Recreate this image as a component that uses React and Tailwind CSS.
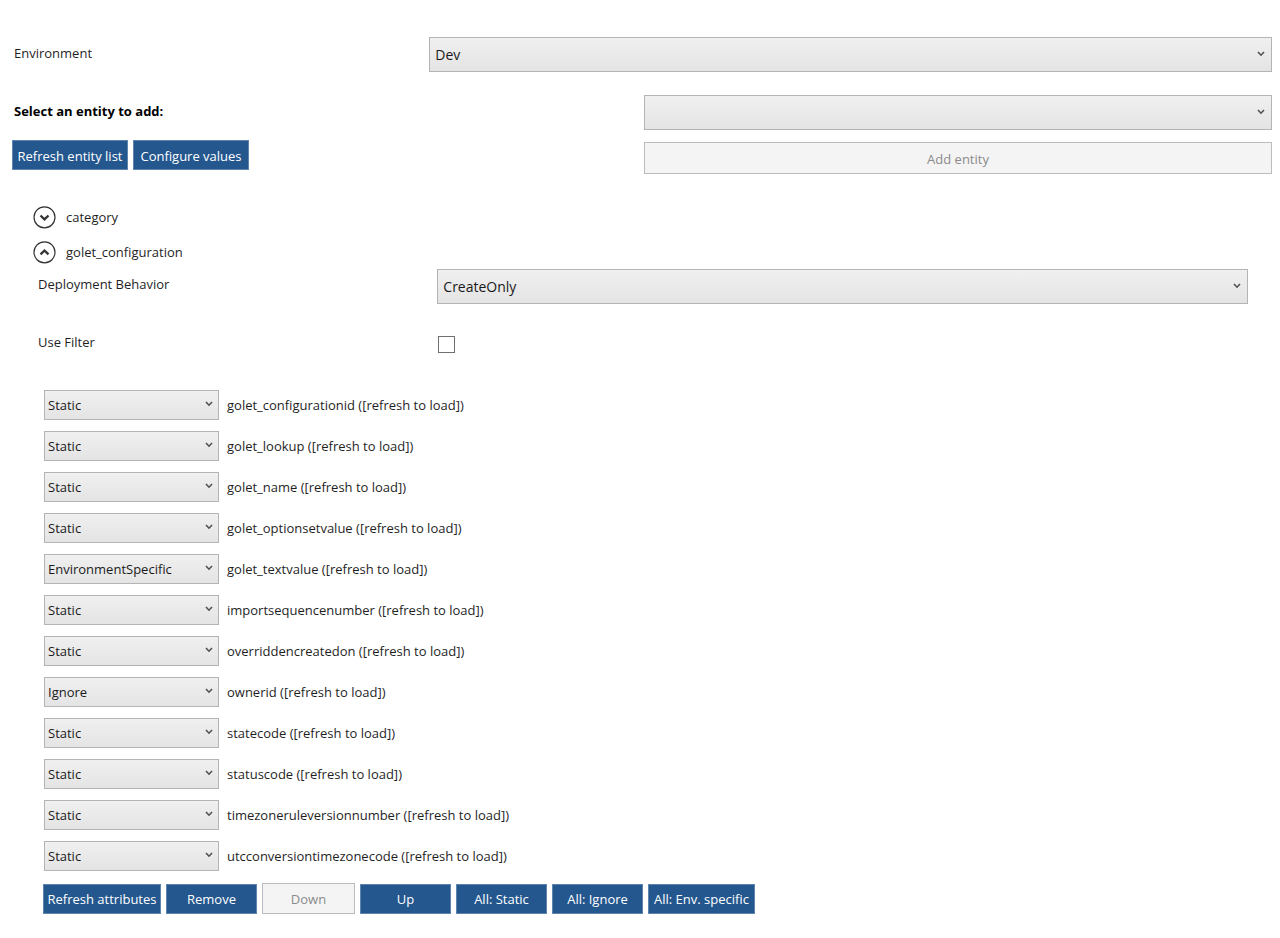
import React, { useState } from 'react';
import clsx from 'clsx';

const ATTRIBUTES = [
  { name: 'golet_configurationid', mode: 'Static' },
  { name: 'golet_lookup', mode: 'Static' },
  { name: 'golet_name', mode: 'Static' },
  { name: 'golet_optionsetvalue', mode: 'Static' },
  { name: 'golet_textvalue', mode: 'EnvironmentSpecific' },
  { name: 'importsequencenumber', mode: 'Static' },
  { name: 'overriddencreatedon', mode: 'Static' },
  { name: 'ownerid', mode: 'Ignore' },
  { name: 'statecode', mode: 'Static' },
  { name: 'statuscode', mode: 'Static' },
  { name: 'timezoneruleversionnumber', mode: 'Static' },
  { name: 'utcconversiontimezonecode', mode: 'Static' },
];

const MODES = ['Static', 'EnvironmentSpecific', 'Ignore'];

function ComboBox({ id, options, small, value, onChange }) {
  return (
    <div className="relative">
      <select
        id={id}
        value={value}
        onChange={(e) => onChange(e.target.value)}
        className={clsx(
          'block w-full appearance-none rounded-none border border-[#b4b4b4] bg-linear-to-b from-[#f0f0f0] to-[#e4e4e4] text-[#1a1a1a]',
          small ? 'h-[30px] pl-[3px] pr-6 text-[13px]' : 'h-[35px] pl-[5px] pr-8 text-[14px]'
        )}
      >
        {options.map((option) => (
          <option key={option} value={option}>{option}</option>
        ))}
      </select>
      <svg
        viewBox="0 0 8 6"
        aria-hidden="true"
        className={clsx(
          'pointer-events-none absolute h-[6px] w-[8px]',
          small ? 'right-[6px] top-[11px]' : 'right-[7px] top-[14px]'
        )}
      >
        <path d="M1 1 L4 4.2 L7 1" fill="none" stroke="#505050" strokeWidth="1.6" />
      </svg>
    </div>
  );
}

function Button({ children, disabled, className }) {
  return (
    <button
      type="button"
      disabled={disabled}
      className={clsx(
        'border pt-px text-[13px] whitespace-nowrap',
        disabled
          ? 'border-[#b9bdbf] bg-[#f4f4f4] text-[#8b8b8b]'
          : 'h-[30px] border-[#5f84ae] bg-[#24578e] text-white',
        className
      )}
    >
      {children}
    </button>
  );
}

// Expander header with the round arrow
function Expander({ name, open, onToggle }) {
  return (
    <button type="button" aria-expanded={open} onClick={onToggle} className="flex h-[35px] items-center gap-[10px]">
      <svg viewBox="0 0 24 24" className="h-6 w-6" fill="none" stroke="#333333" aria-hidden="true">
        <circle cx="12.5" cy="12.3" r="10.5" strokeWidth="1.2" />
        <path d={open ? 'M8.5 14.3 L12.5 10.5 L16.5 14.3' : 'M8.5 10.5 L12.5 14.3 L16.5 10.5'} strokeWidth="2.3" />
      </svg>
      <span>{name}</span>
    </button>
  );
}

export default function App() {
  const [environment, setEnvironment] = useState('Dev');
  const [entity, setEntity] = useState('');
  const [behavior, setBehavior] = useState('CreateOnly');
  const [useFilter, setUseFilter] = useState(false);
  const [attributes, setAttributes] = useState(ATTRIBUTES);
  const [categoryOpen, setCategoryOpen] = useState(false);
  const [configOpen, setConfigOpen] = useState(true);

  const setMode = (name, mode) => {
    setAttributes(attributes.map((a) => (a.name === name ? { ...a, mode } : a)));
  };

  return (
    <main className="bg-white px-2 pt-[37px] pb-6 font-['Open_Sans','Noto_Sans',sans-serif] text-[13px] leading-5 text-[#1f1f1f]">
      <div className="grid grid-cols-[1fr_2fr]">
        <label htmlFor="environment" className="pt-[6px] pl-[6px]">Environment</label>
        <ComboBox id="environment" options={['Dev', 'Test', 'Prod']} value={environment} onChange={setEnvironment} />
      </div>

      <div className="mt-[23px] grid grid-cols-2">
        <div className="pl-1">
          <label htmlFor="entity" className="block pt-[6px] pl-[2px] font-bold text-black">
            Select an entity to add:
          </label>
          <div className="mt-[19px] flex gap-[5px]">
            <Button className="w-[116px]">Refresh entity list</Button>
            <Button className="w-[116px]">Configure values</Button>
          </div>
        </div>
        <div className="flex flex-col gap-3 pl-1">
          <ComboBox id="entity" options={['', 'account', 'contact']} value={entity} onChange={setEntity} />
          <Button disabled className="h-8">Add entity</Button>
        </div>
      </div>

      <section className="mt-[25px] px-6">
        <Expander name="category" open={categoryOpen} onToggle={() => setCategoryOpen(!categoryOpen)} />
        <Expander name="golet_configuration" open={configOpen} onToggle={() => setConfigOpen(!configOpen)} />

        {configOpen && (
          <>
            <div className="grid grid-cols-[1fr_2fr]">
              <label htmlFor="behavior" className="pt-[5px] pl-[6px]">Deployment Behavior</label>
              <ComboBox
                id="behavior"
                options={['CreateOnly', 'CreateAndUpdate']}
                value={behavior}
                onChange={setBehavior}
              />
            </div>
            <div className="mt-7 grid grid-cols-[1fr_2fr]">
              <label htmlFor="filter" className="pl-[6px]">Use Filter</label>
              <input
                id="filter"
                type="checkbox"
                checked={useFilter}
                onChange={(e) => setUseFilter(e.target.checked)}
                className="mt-1 ml-px h-[17px] w-[17px] appearance-none border border-[#707070] bg-white checked:bg-[#24578e]"
              />
            </div>

            <ul className="mt-[37px] flex flex-col gap-[11px] pl-3">
              {attributes.map((attr) => (
                <li key={attr.name} className="flex items-center gap-2">
                  <div className="w-[175px]">
                    <ComboBox
                      id={attr.name}
                      small
                      options={MODES}
                      value={attr.mode}
                      onChange={(mode) => setMode(attr.name, mode)}
                    />
                  </div>
                  <label htmlFor={attr.name}>{attr.name} ([refresh to load])</label>
                </li>
              ))}
            </ul>

            <div className="mt-3 flex items-center gap-[5px] pl-[11px]">
              <Button className="w-[118px]">Refresh attributes</Button>
              <Button className="w-[91px]">Remove</Button>
              <Button disabled className="h-[31px] w-[93px]">Down</Button>
              <Button className="w-[91px]">Up</Button>
              <Button className="w-[91px]">All: Static</Button>
              <Button className="w-[91px]">All: Ignore</Button>
              <Button className="w-[107px]">All: Env. specific</Button>
            </div>
          </>
        )}
      </section>
    </main>
  );
}
